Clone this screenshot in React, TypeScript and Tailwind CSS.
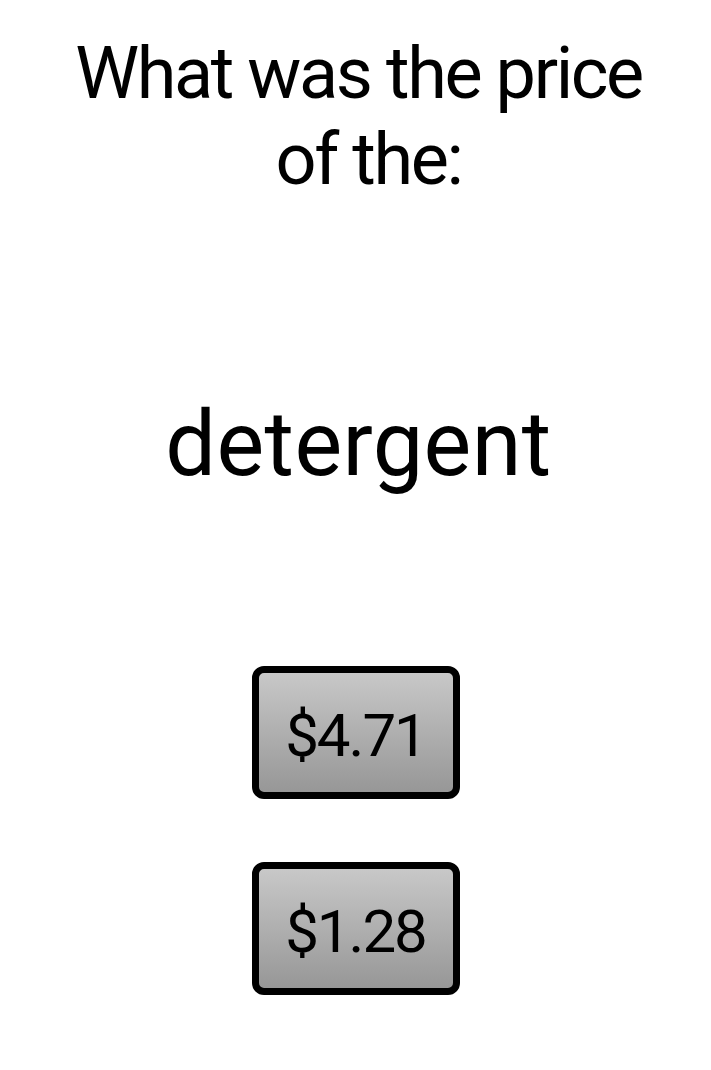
const prices = ["$4.71", "$1.28"];

function PriceButton({ label }: { label: string }) {
  return (
    <button
      type="button"
      className="flex h-[133px] w-[208px] items-center justify-center rounded-[12px] border-[7px] border-black bg-gradient-to-b from-[#c8c8c8] to-[#979797] pt-[7px] text-[60px] leading-none tracking-[-2px] text-black"
    >
      {label}
    </button>
  );
}

export default function App() {
  return (
    <div className="flex min-h-[1070px] w-full flex-col items-center bg-white font-['Roboto',sans-serif] text-black">
      <h1 className="mt-[31px] flex flex-col items-center text-[72px] font-normal leading-[86px] tracking-[-2.4px]">
        <span className="pl-[6px]">What was the price</span>
        <span className="pl-[26px]">of the:</span>
      </h1>
      <div className="mt-[190px] pl-[6px] text-[90px] leading-[103px] tracking-[0.4px]">detergent</div>
      <div className="mt-[170px] flex flex-col items-center gap-[63px]">
        {prices.map((p) => (
          <PriceButton key={p} label={p} />
        ))}
      </div>
    </div>
  );
}
